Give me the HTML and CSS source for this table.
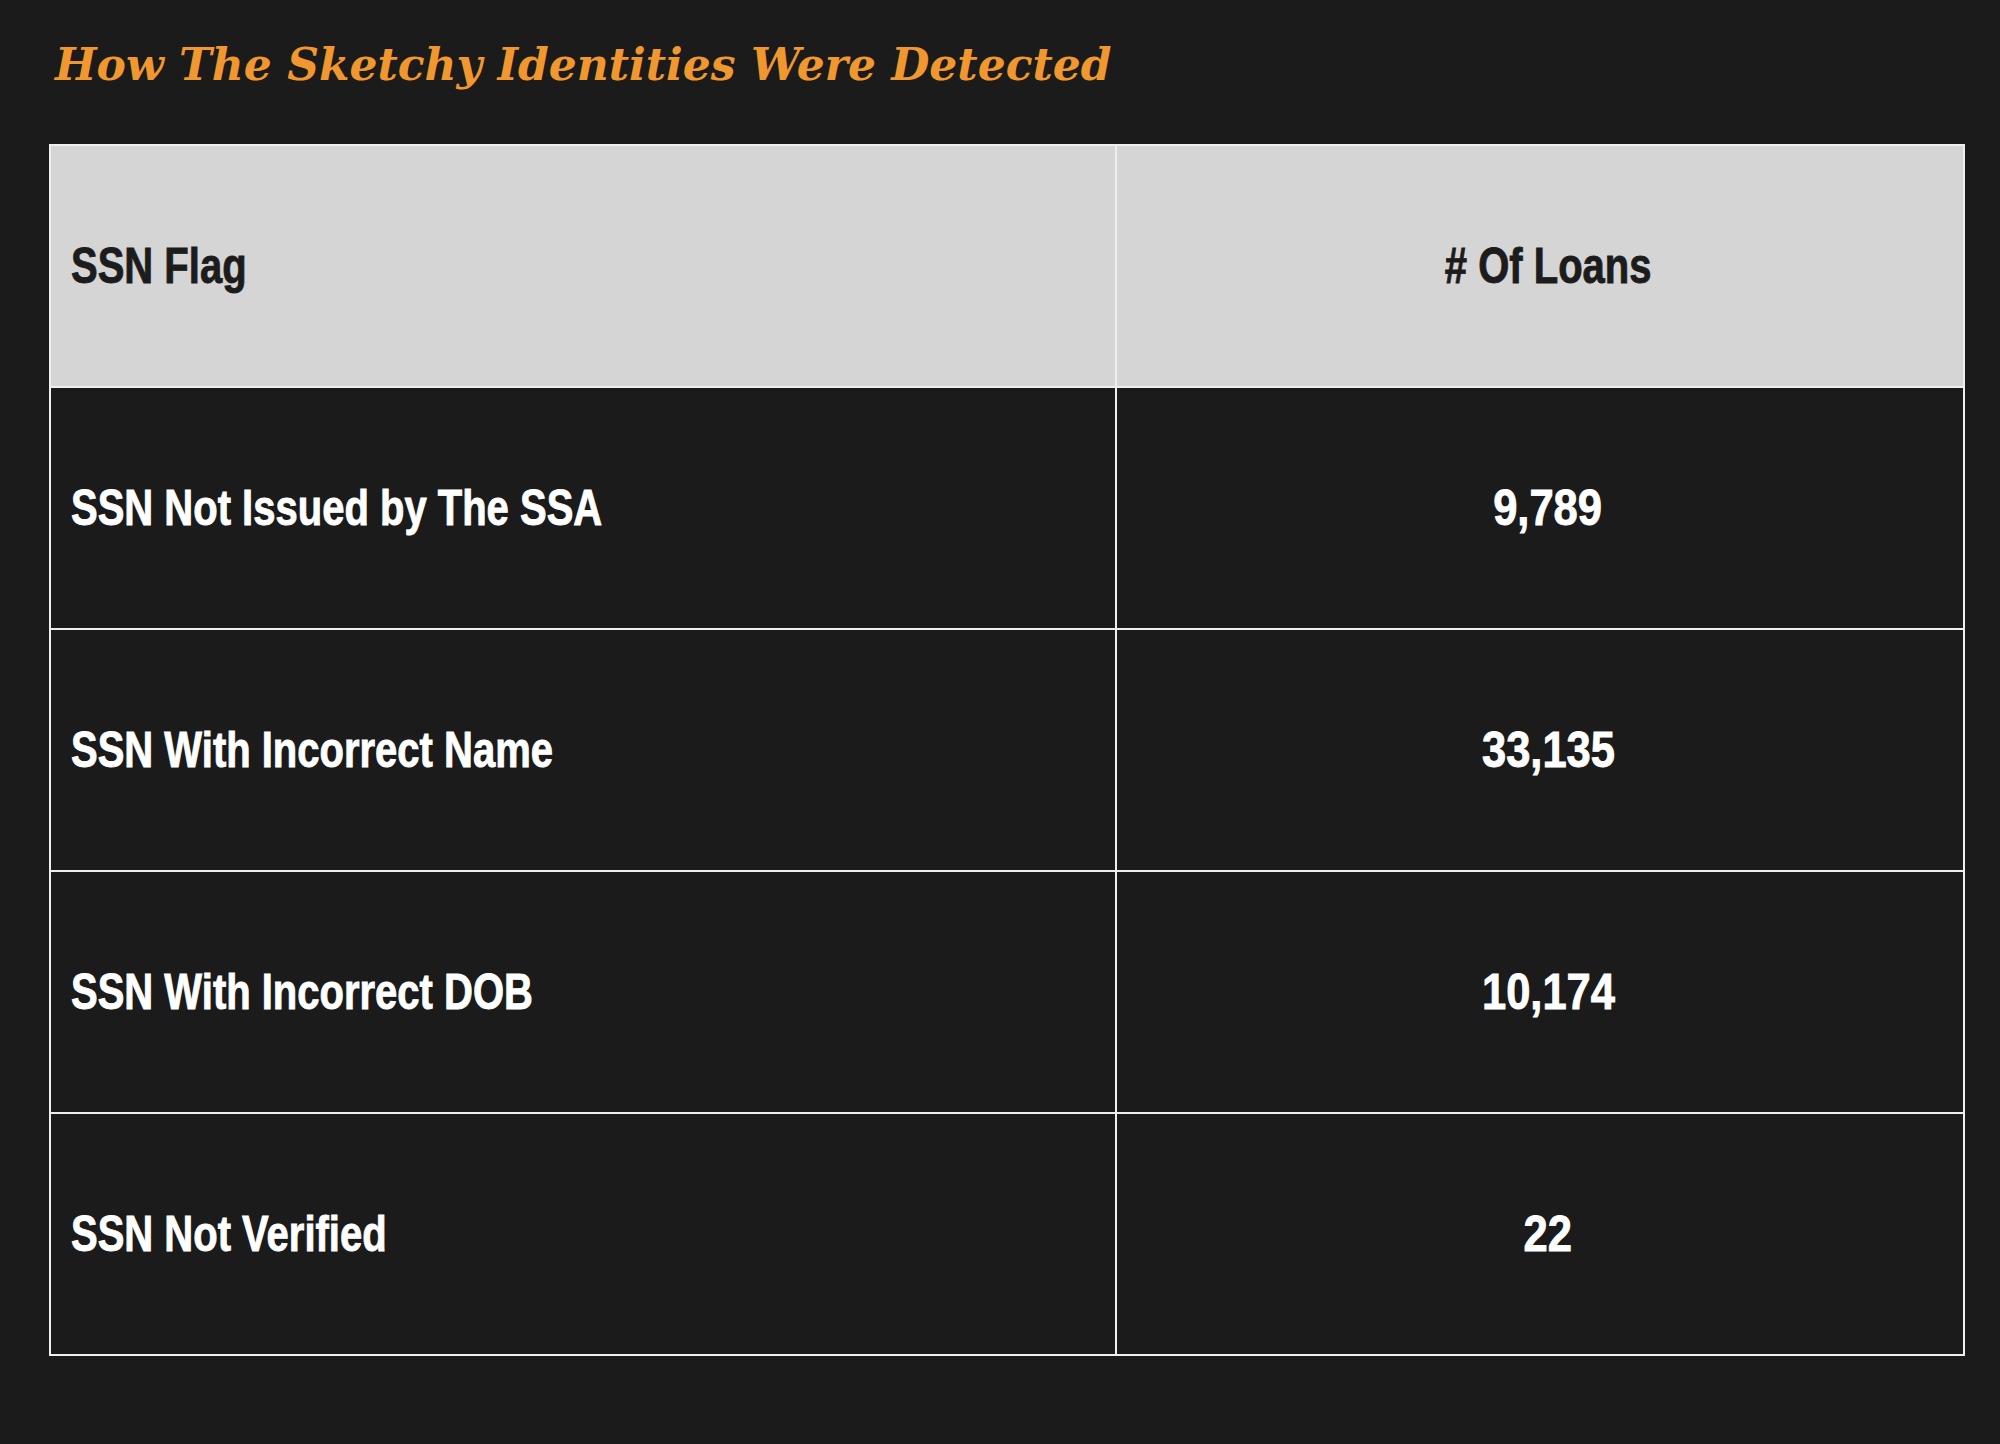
FILE: index.html
```html
<!DOCTYPE html>
<html lang="en">
<head>
<meta charset="utf-8">
<title>How The Sketchy Identities Were Detected</title>
<link rel="stylesheet" href="styles.css">
</head>
<body>
<main class="page">
  <h2 class="title">How The Sketchy Identities Were Detected</h2>
  <table class="flags">
    <thead>
      <tr><th class="c-flag"><span class="txt">SSN Flag</span></th><th class="c-num"><span class="txt"># Of Loans</span></th></tr>
    </thead>
    <tbody>
      <tr><td class="c-flag"><span class="txt">SSN Not Issued by The SSA</span></td><td class="c-num"><span class="txt num">9,789</span></td></tr>
      <tr><td class="c-flag"><span class="txt">SSN With Incorrect Name</span></td><td class="c-num"><span class="txt num">33,135</span></td></tr>
      <tr><td class="c-flag"><span class="txt">SSN With Incorrect DOB</span></td><td class="c-num"><span class="txt num">10,174</span></td></tr>
      <tr><td class="c-flag"><span class="txt">SSN Not Verified</span></td><td class="c-num"><span class="txt num">22</span></td></tr>
    </tbody>
  </table>
</main>
</body>
</html>
```
FILE: styles.css
```css
html, body {
  margin: 0;
  padding: 0;
  background: #1a1b1a;
}
.page {
  padding: 33px 35px 0 49px;
}
.title {
  margin: 0 0 0 6px;
  font-family: "DejaVu Serif", "Liberation Serif", serif;
  font-style: italic;
  font-weight: bold;
  font-size: 44px;
  line-height: 64px;
  color: #f0982f;
  height: 111px;
  white-space: nowrap;
}
.flags {
  width: 1916px;
  border-collapse: collapse;
  font-family: "Liberation Sans", Arial, sans-serif;
  font-weight: bold;
  font-size: 50px;
}
.flags th, .flags td {
  border: 2px solid #efefef;
  height: 242px;
  padding: 0 20px;
  box-sizing: border-box;
  vertical-align: middle;
  white-space: nowrap;
}
.flags th {
  background: #d5d5d5;
  color: #1c1c1c;
  font-weight: bold;
}
.flags td {
  color: #ffffff;
}
.txt {
  display: inline-block;
  transform: scaleX(0.8);
  -webkit-text-stroke: 0.9px currentColor;
}
.c-flag {
  width: 1066px;
  text-align: left;
}
.c-flag .txt {
  transform-origin: left center;
}
.flags .c-num {
  text-align: center;
  padding-left: 36px;
  padding-right: 20px;
}
.c-num .txt {
  transform-origin: center center;
}
.c-num .num {
  transform: scaleX(0.87);
}
```
